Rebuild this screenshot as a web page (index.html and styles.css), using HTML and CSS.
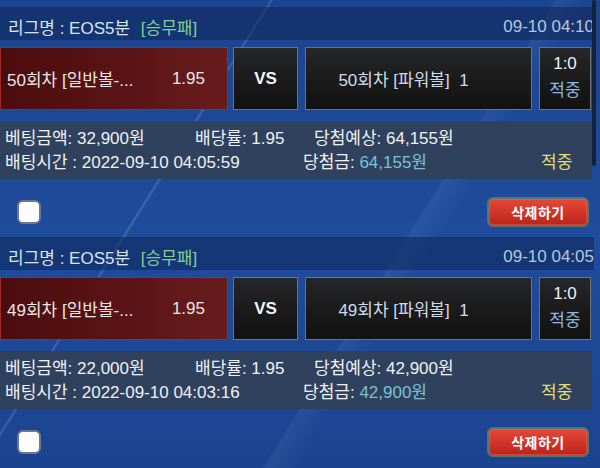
FILE: index.html
```html
<!DOCTYPE html>
<html lang="ko">
<head>
    <meta charset="UTF-8">
    <meta name="viewport" content="width=device-width, initial-scale=1.0">
    <title>배팅내역</title>
    <link rel="stylesheet" href="styles.css">
</head>
<body>
    <div class="scroll-thumb"></div>

    <div class="bet-list">
        <!-- 50회차 -->
        <div class="bet">
            <div class="bet-head">
                <div class="league">리그명 : EOS5분 <span class="type">[승무패]</span></div>
                <div class="date">09-10 04:10</div>
            </div>
            <div class="match">
                <div class="home picked">
                    <span class="team">50회차 [일반볼-...</span>
                    <span class="odd">1.95</span>
                </div>
                <div class="vs">VS</div>
                <div class="away">50회차 [파워볼]&nbsp; 1</div>
                <div class="score">
                    <span>1:0</span>
                    <span class="result">적중</span>
                </div>
            </div>
            <div class="info">
                <div class="info-row">
                    <span class="c1">베팅금액: 32,900원</span>
                    <span class="c2">배당률: 1.95</span>
                    <span>당첨예상: 64,155원</span>
                </div>
                <div class="info-row">
                    <span class="c3">배팅시간 : 2022-09-10 04:05:59</span>
                    <span class="c4">당첨금: <em class="win">64,155원</em></span>
                    <span class="hit">적중</span>
                </div>
            </div>
            <div class="bet-foot">
                <div class="check"></div>
                <button class="del-btn">삭제하기</button>
            </div>
        </div>

        <!-- 49회차 -->
        <div class="bet">
            <div class="bet-head">
                <div class="league">리그명 : EOS5분 <span class="type">[승무패]</span></div>
                <div class="date">09-10 04:05</div>
            </div>
            <div class="match">
                <div class="home picked">
                    <span class="team">49회차 [일반볼-...</span>
                    <span class="odd">1.95</span>
                </div>
                <div class="vs">VS</div>
                <div class="away">49회차 [파워볼]&nbsp; 1</div>
                <div class="score">
                    <span>1:0</span>
                    <span class="result">적중</span>
                </div>
            </div>
            <div class="info">
                <div class="info-row">
                    <span class="c1">베팅금액: 22,000원</span>
                    <span class="c2">배당률: 1.95</span>
                    <span>당첨예상: 42,900원</span>
                </div>
                <div class="info-row">
                    <span class="c3">배팅시간 : 2022-09-10 04:03:16</span>
                    <span class="c4">당첨금: <em class="win">42,900원</em></span>
                    <span class="hit">적중</span>
                </div>
            </div>
            <div class="bet-foot">
                <div class="check"></div>
                <button class="del-btn">삭제하기</button>
            </div>
        </div>
    </div>
</body>
</html>
```

FILE: styles.css
```css
body {
    margin: 0;
    font-family: "Liberation Sans", "Noto Sans CJK KR", sans-serif;
    font-size: 17px;
    color: #eef1f5;
    background-color: #1d4996;
    background-image:
        linear-gradient(122deg, transparent 30.2%, rgba(190, 210, 240, 0.22) 30.4%, transparent 30.7%),
        linear-gradient(122deg, transparent 62%, rgba(120, 160, 220, 0.12) 62.5%, transparent 66%),
        linear-gradient(180deg, #1c4590 0%, #1f4c9b 50%, #1b4490 100%);
    height: 468px;
    overflow: hidden;
    position: relative;
}

/* overlay scrollbar thumb */
.scroll-thumb {
    position: absolute;
    top: 0;
    left: 592px;
    width: 4px;
    height: 166px;
    border-radius: 2px;
    background: #14233a;
}

.bet-list {
    width: 592px;
    padding-top: 7px;
}

.bet {
    height: 230px;
}

.bet-head {
    height: 33px;
    display: flex;
    align-items: center;
    justify-content: space-between;
    padding: 0 0 0 8px;
    background: rgba(14, 38, 88, 0.55);
    margin-right: -2px;
}

.league {
    color: #dde4ee;
    padding-top: 6px;
}

.type {
    color: #84cf96;
    margin-left: 6px;
}

.date {
    color: #b8c6da;
    padding-top: 6px;
}

.match {
    display: flex;
    height: 63px;
    margin-top: 7px;
}

.home {
    width: 228px;
    box-sizing: border-box;
    border: 1px solid #a2282a;
    background: linear-gradient(90deg, #4b0c0d 0%, #5c1516 60%, #681d1d 100%);
    display: flex;
    align-items: center;
    justify-content: space-between;
    padding: 0 22px 0 6px;
    color: #e9e6e6;
}

.vs,
.away,
.score {
    box-sizing: border-box;
    border: 1px solid #6f7378;
    background: linear-gradient(180deg, #262728 0%, #1a1a1b 55%, #121212 100%);
}

.vs {
    width: 65px;
    margin-left: 5px;
    display: flex;
    align-items: center;
    justify-content: center;
    font-weight: bold;
    color: #f4f4f4;
}

.away {
    width: 227px;
    margin-left: 7px;
    display: flex;
    align-items: center;
    justify-content: center;
    padding-right: 30px;
    color: #cfdcec;
}

.score {
    width: 52px;
    margin-left: 7px;
    display: flex;
    flex-direction: column;
    align-items: center;
    justify-content: center;
    gap: 2px;
    padding-bottom: 2px;
    color: #eef1f5;
}

.score .result {
    color: #8fb8e2;
}

.info {
    margin-top: 11px;
    height: 58px;
    box-sizing: border-box;
    padding: 6px 0 0 5px;
    background: #30415e;
}

.info-row {
    display: flex;
    height: 24px;
    line-height: 24px;
    white-space: nowrap;
}

.c1 { width: 190px; }
.c2 { width: 119px; }
.c3 { width: 298px; }
.c4 { width: 238px; }

.win {
    font-style: normal;
    color: #74c4d6;
}

.hit {
    color: #e6df76;
}

.bet-foot {
    height: 58px;
    box-sizing: border-box;
    padding: 7px 3px 0 17px;
    display: flex;
    align-items: center;
    justify-content: space-between;
}

.check {
    width: 20px;
    height: 20px;
    border: 2px solid #6f7789;
    border-radius: 6px;
    background: #fdfdfd;
}

.del-btn {
    width: 102px;
    height: 30px;
    border: 2px solid #55756f;
    border-radius: 6px;
    background: linear-gradient(180deg, #e4493a 0%, #d2352a 50%, #b9251c 100%);
    box-shadow: inset 0 0 0 1px rgba(255, 120, 100, 0.35);
    color: #ffffff;
    font-family: "Liberation Sans", "Noto Sans CJK KR", sans-serif;
    font-size: 14px;
    font-weight: bold;
    letter-spacing: 0.5px;
    padding: 0;
}
```
